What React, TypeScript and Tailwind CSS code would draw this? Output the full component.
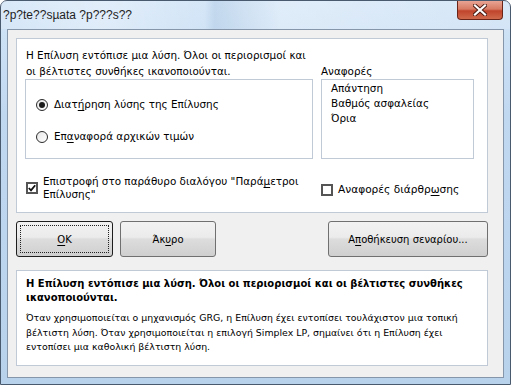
import React from "react";

const U = ({ children }: { children: React.ReactNode }) => (
  <span className="underline underline-offset-[2px]">{children}</span>
);

function Radio({ checked }: { checked?: boolean }) {
  return (
    <span className="w-[12px] h-[12px] rounded-full border border-[#2b2b2b] bg-[linear-gradient(135deg,#e6e6e6,#ffffff)] flex items-center justify-center shrink-0">
      {checked && <span className="w-[6px] h-[6px] rounded-full bg-[#1a1a1a]" />}
    </span>
  );
}

function Check({ checked }: { checked?: boolean }) {
  return (
    <span className="w-[12px] h-[12px] border-2 border-[#555555] bg-white flex items-center justify-center shrink-0">
      {checked && (
        <svg width="8" height="8" viewBox="0 0 8 8">
          <path d="M0.8 4 L3 6.3 L7.2 1.2" fill="none" stroke="#111" strokeWidth="1.8" />
        </svg>
      )}
    </span>
  );
}

function Btn({ children, w, def }: { children: React.ReactNode; w: string; def?: boolean }) {
  return (
    <div
      className={`${w} h-[36px] rounded-[3px] border ${
        def ? "border-[#1e1e1e]" : "border-[#707070]"
      } bg-[linear-gradient(180deg,#f2f2f2_0%,#ebebeb_45%,#dddddd_50%,#cfcfcf_100%)] flex items-center justify-center p-[3px]`}
    >
      <div
        className={`w-full h-full flex items-center justify-center ${
          def ? "border border-dotted border-[#222]" : ""
        }`}
      >
        {children}
      </div>
    </div>
  );
}

export default function App() {
  return (
    <div className="w-[511px] h-[385px] overflow-hidden bg-white font-['DejaVu_Sans',sans-serif] text-[10px] text-black">
      <div className="w-[511px] h-[385px] rounded-t-[7px] border border-[#4a5a6e] bg-[linear-gradient(180deg,#d3e5f7_0%,#c0d8f0_30%,#b9d2ec_100%)] flex flex-col">
        <div className="h-[28px] flex items-start justify-between bg-[linear-gradient(90deg,rgba(255,255,255,0.15)_0%,rgba(255,255,255,0.35)_20%,rgba(255,255,255,0.05)_40%,rgba(150,180,210,0.25)_42%,rgba(255,255,255,0.3)_55%,rgba(255,255,255,0.1)_100%)]">
          <div className="pl-[2px] pt-[7px] font-['Liberation_Sans',sans-serif] text-[12px] leading-[14px] text-[#1e1e1e]">
            ?p?te??sµata ?p???s??
          </div>
          <div className="mr-[7px] w-[46px] h-[19px] rounded-b-[4px] border border-t-0 border-[#6b2418] bg-[linear-gradient(180deg,#e8a493_0%,#d77a63_45%,#c0442b_55%,#d06a4c_100%)] flex items-center justify-center">
            <svg width="14" height="12" viewBox="0 0 14 12">
              <path d="M2 1.5 L12 10.5 M12 1.5 L2 10.5" stroke="#4a1a12" strokeWidth="4" strokeLinecap="square" />
              <path d="M2 1.5 L12 10.5 M12 1.5 L2 10.5" stroke="#ffffff" strokeWidth="2.2" strokeLinecap="square" />
            </svg>
          </div>
        </div>
        <div className="mx-[6px] h-[349px] border border-[#8596ab] bg-[#f0f0f0] pt-[8px] pl-[8px] flex flex-col">
          {/* panel 1 */}
          <div className="w-[472px] h-[175px] border border-[#bfcad6] bg-white pl-[8px] flex flex-col text-[10.4px]">
            <div className="flex">
              <div className="w-[288px] flex flex-col">
                <div className="h-[40px] pt-[8px] pl-[1px] leading-[16px] whitespace-nowrap">
                  Η Επίλυση εντόπισε μια λύση. Όλοι οι περιορισμοί και
                  <br />
                  οι βέλτιστες συνθήκες ικανοποιούνται.
                </div>
                <div className="h-[80px] border border-[#bfcad6] flex flex-col pl-[10px]">
                  <div className="h-[16px] mt-[17px] flex items-center gap-[6px]">
                    <Radio checked />
                    <span>
                      Διατ<U>ή</U>ρηση λύσης της Επίλυσης
                    </span>
                  </div>
                  <div className="h-[16px] mt-[16px] flex items-center gap-[6px]">
                    <Radio />
                    <span>
                      Επ<U>α</U>ναφορά αρχικών τιμών
                    </span>
                  </div>
                </div>
              </div>
              <div className="ml-[8px] w-[153px] flex flex-col">
                <div className="h-[40px] flex items-end">
                  <span className="leading-[16px]">Αναφορές</span>
                </div>
                <div className="h-[80px] border border-[#bfcad6] pl-[9px] pt-[1px] leading-[15px]">
                  <div>Απάντηση</div>
                  <div>Βαθμός ασφαλείας</div>
                  <div>Όρια</div>
                </div>
              </div>
            </div>
            <div className="flex mt-[16px]">
              <div className="w-[296px] flex items-center gap-[5px] pl-[1px]">
                <Check checked />
                <div className="leading-[13px] whitespace-nowrap">
                  Επιστροφή στο παράθυρο διαλόγου "Παρά<U>μ</U>ετροι
                  <br />
                  Επίλυσης"
                </div>
              </div>
              <div className="flex items-center gap-[5px] pt-[3px]">
                <Check />
                <span className="text-[10.6px]">
                  Αναφορές διάρθρ<U>ω</U>σης
                </span>
              </div>
            </div>
          </div>
          {/* buttons */}
          <div className="mt-[8px] w-[472px] flex">
            <Btn w="w-[97px]" def>
              <span>
                <U>O</U>K
              </span>
            </Btn>
            <div className="ml-[7px]">
              <Btn w="w-[96px]">
                <span>
                  Άκ<U>υ</U>ρο
                </span>
              </Btn>
            </div>
            <div className="ml-auto">
              <Btn w="w-[160px]">
                <span>
                  Α<U>π</U>οθήκευση σεναρίου...
                </span>
              </Btn>
            </div>
          </div>
          {/* bottom panel */}
          <div className="mt-[13px] w-[472px] h-[96px] border border-[#bfcad6] bg-white pl-[9px] pt-[6px]">
            <div className="font-bold leading-[14px] whitespace-nowrap">
              Η Επίλυση εντόπισε μια λύση. Όλοι οι περιορισμοί και οι βέλτιστες συνθήκες
              <br />
              ικανοποιούνται.
            </div>
            <div className="mt-[6px] leading-[14.5px] text-[9.4px] whitespace-nowrap">
              Όταν χρησιμοποιείται ο μηχανισμός GRG, η Επίλυση έχει εντοπίσει τουλάχιστον μια τοπική
              <br />
              βέλτιστη λύση. Όταν χρησιμοποιείται η επιλογή Simplex LP, σημαίνει ότι η Επίλυση έχει
              <br />
              εντοπίσει μια καθολική βέλτιστη λύση.
            </div>
          </div>
        </div>
      </div>
    </div>
  );
}
